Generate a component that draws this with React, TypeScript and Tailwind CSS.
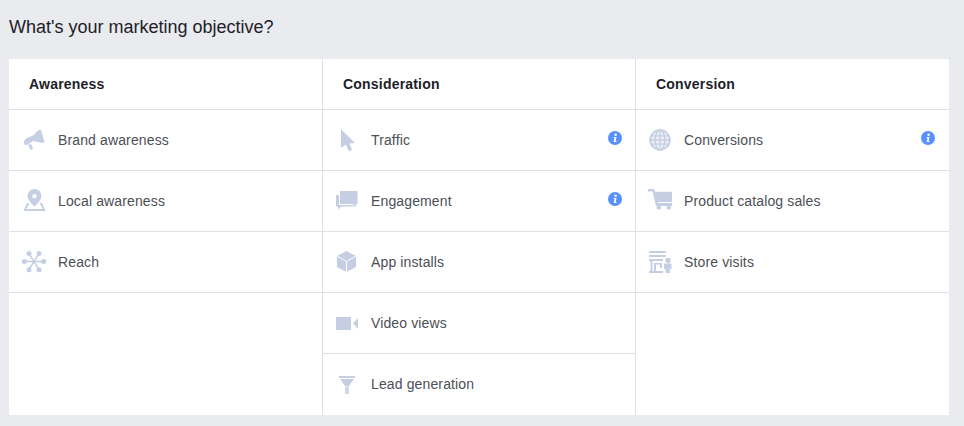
import type { ReactNode } from 'react';

type Objective = Readonly<{
  label: string;
  icon: ReactNode;
  info?: boolean;
}>;

const fill = '#c5cee2';

function Icon({ children }: { children: ReactNode }) {
  return (
    <svg viewBox="0 0 26 26" className="h-[26px] w-[26px] shrink-0" fill={fill}>
      {children}
    </svg>
  );
}

const MegaphoneIcon = (
  <Icon>
    <path d="M17.500 3h2.500l3.500 12-1.500 1-10-2-6 4-3-.5L3 14l2-2.500 7-3 5.500-5.500Z" />
    <path d="m7 18 3-1 2.200 5-2.200 1.200L7 18Z" />
  </Icon>
);

const PinIcon = (
  <Icon>
    <path
      fillRule="evenodd"
      d="M13.500 1a7 7 0 0 1 7 7c0 3.500-4.500 8.500-7 10.500-2.500-2-7-7-7-10.500a7 7 0 0 1 7-7Zm0 5a2.200 2.200 0 1 0 0 4.400 2.200 2.200 0 0 0 0-4.400Z"
    />
    <path d="M6 15h2.500l-3.300 6h16.600l-3.300-6H21l3.500 8h-22L6 15Z" />
  </Icon>
);

const ReachIcon = (
  <Icon>
    <path
      d="M3.300 12.500h19.400M8 4.700l10 15.800M18 4.700 8 20.500"
      stroke={fill}
      strokeWidth="1.500"
    />
    <circle cx="3.300" cy="12.500" r="2.500" />
    <circle cx="22.700" cy="12.500" r="2.500" />
    <circle cx="8" cy="4.500" r="2.500" />
    <circle cx="18" cy="4.500" r="2.500" />
    <circle cx="8" cy="20.700" r="2.500" />
    <circle cx="18" cy="20.700" r="2.500" />
  </Icon>
);

const CursorIcon = (
  <Icon>
    <path d="M6 2 20 16l-5.500.5 2.500 6.500-3.500 1-2.500-6.500L6 21V2Z" />
  </Icon>
);

const ChatIcon = (
  <Icon>
    <path d="M1 7h18v11.500H6.500L3 21.500v-3H1V7Z" />
    <path d="M4.500 2.500H23v14h-1.500V20l-3.500-3.500H4.500v-14Z" stroke="#fff" strokeWidth="1" />
  </Icon>
);

const CubeIcon = (
  <Icon>
    <path d="M11.500 2 21 7v11l-9.500 5L2 18V7l9.500-5Z" />
    <path d="M2 7l9.500 5.500L21 7M11.500 12.500V23" fill="none" stroke="#fff" strokeWidth="1" />
  </Icon>
);

const VideoIcon = (
  <Icon>
    <path d="M1 7h15v13H1V7Z" />
    <path d="M18 13.500 23 8v11l-5-5.500Z" />
  </Icon>
);

const FunnelIcon = (
  <Icon>
    <path d="M4 5h16v2H4V5Z" />
    <path d="M5 8h14l-5 7H10L5 8Z" />
    <path d="M10 15.500h4V23h-4v-7.500Z" opacity="0.8" />
  </Icon>
);

const GlobeIcon = (
  <Icon>
    <circle cx="12" cy="13" r="10.500" opacity="0.35" />
    <g fill="none" stroke={fill} strokeWidth="1.300">
      <circle cx="12" cy="13" r="9.800" strokeWidth="1.800" />
      <ellipse cx="12" cy="13" rx="4.800" ry="9.800" />
      <path d="M12 3v20M2.500 13h19M3.500 8.800h17M3.500 17.200h17" />
    </g>
  </Icon>
);

const CartIcon = (
  <Icon>
    <path d="M0 1h6l1 2.700h17V14H9.500l.5 1h14v3H8L4.500 3.500H0V1Z" />
    <rect x="8.500" y="18" width="4.500" height="3.500" rx="1.500" />
    <rect x="18.500" y="18" width="4.500" height="3.500" rx="1.500" />
  </Icon>
);

const StoreIcon = (
  <Icon>
    <path d="M1 2h17v2H1V2ZM1 6h17v2H1V6ZM1 10h14v2H1v-2ZM1 22h14v2H1v-2Z" />
    <path d="M2.500 12H4.500v10h-2V12ZM6 14h8v1.500H8V22H6v-8ZM12 15.500h2V19h-2v-3.500Z" />
    <circle cx="20" cy="11.500" r="2.700" />
    <path d="M16 14.500h7.500v5.500h-1.500v4h-4.500v-4H16v-5.500Z" />
  </Icon>
);

const COLUMNS: ReadonlyArray<{
  title: string;
  className: string;
  labelClassName: string;
  infoClassName: string;
  objectives: ReadonlyArray<Objective>;
}> = [
  {
    title: 'Awareness',
    className: 'w-[314px] border-r border-[#dddfe2]',
    labelClassName: 'ml-[11px] text-sm tracking-[0.13px] text-[#4b4f56]',
    infoClassName: '',
    objectives: [
      { label: 'Brand awareness', icon: MegaphoneIcon },
      { label: 'Local awareness', icon: PinIcon },
      { label: 'Reach', icon: ReachIcon },
    ],
  },
  {
    title: 'Consideration',
    className: 'w-[313px] border-r border-[#dddfe2]',
    labelClassName: 'ml-[10px] text-sm tracking-[0.13px] text-[#4b4f56]',
    infoClassName: 'mt-[21px] mr-[13px] ml-auto h-[14px] w-[14px] self-start',
    objectives: [
      { label: 'Traffic', icon: CursorIcon, info: true },
      { label: 'Engagement', icon: ChatIcon, info: true },
      { label: 'App installs', icon: CubeIcon },
      { label: 'Video views', icon: VideoIcon },
      { label: 'Lead generation', icon: FunnelIcon },
    ],
  },
  {
    title: 'Conversion',
    className: 'w-[313px]',
    labelClassName: 'ml-[10px] text-sm tracking-[0.13px] text-[#4b4f56]',
    infoClassName: 'mt-[21px] mr-[14px] ml-auto h-[14px] w-[14px] self-start',
    objectives: [
      { label: 'Conversions', icon: GlobeIcon, info: true },
      { label: 'Product catalog sales', icon: CartIcon },
      { label: 'Store visits', icon: StoreIcon },
    ],
  },
];

function InfoIcon({ className }: { className: string }) {
  return (
    <svg viewBox="0 0 14 14" className={className}>
      <circle cx="7" cy="7" r="7" fill="#5890ff" />
      <circle cx="7.600" cy="3.700" r="1.300" fill="#fff" />
      <path d="M5.700 6h2.800l-.9 4h.9v1H5.600l.9-4h-.8V6Z" fill="#fff" />
    </svg>
  );
}

export default function App() {
  return (
    <div className="h-[426px] w-[964px] overflow-hidden bg-[#e9ebee] px-[9px] font-['Liberation_Sans',Arial,sans-serif]">
      <h1 className="h-[59px] pt-[17px] text-[18px] leading-5 font-normal text-[#1d2129]">
        What's your marketing objective?
      </h1>
      <div className="flex h-[356px] w-[940px] bg-white">
        {COLUMNS.map((column) => (
          <div key={column.title} className={column.className}>
            <div className="flex h-[51px] items-center border-b border-[#dddfe2] pl-5 text-sm font-bold tracking-[0.2px] text-[#1d2129]">
              {column.title}
            </div>
            {column.objectives.map((objective, index) => (
              <div
                key={objective.label}
                className={
                  index === 4
                    ? 'flex h-[61px] items-center pb-px pl-3'
                    : 'flex h-[61px] items-center border-b border-[#dddfe2] pl-3'
                }>
                {objective.icon}
                <span className={column.labelClassName}>{objective.label}</span>
                {objective.info ? (
                  <InfoIcon className={column.infoClassName} />
                ) : null}
              </div>
            ))}
          </div>
        ))}
      </div>
    </div>
  );
}
